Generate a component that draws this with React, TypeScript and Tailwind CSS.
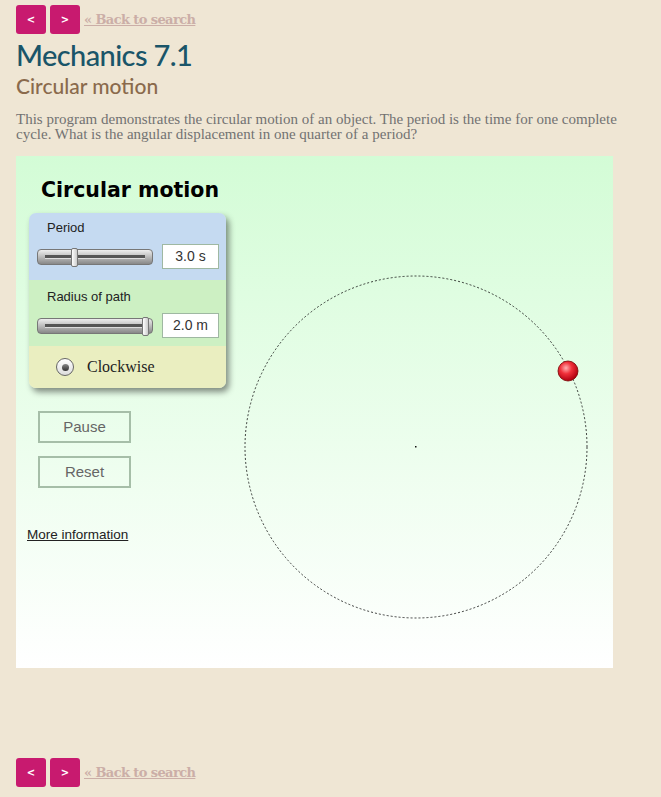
import React from 'react';

function NavRow() {
  return (
    <div className="flex items-center gap-[4px]">
      <button className="w-[30px] h-[29px] rounded-[3px] bg-[#c81a6f] text-white text-[10px] font-bold font-['DejaVu_Sans',sans-serif]">
        &lt;
      </button>
      <button className="w-[30px] h-[29px] rounded-[3px] bg-[#c81a6f] text-white text-[10px] font-bold font-['DejaVu_Sans',sans-serif]">
        &gt;
      </button>
      <a
        href="#"
        className="text-[13px] font-bold text-[#cbaea7] underline font-['DejaVu_Serif',serif] tracking-[-0.6px]"
      >
        « Back to search
      </a>
    </div>
  );
}

function Slider({ pos }: { pos: number }) {
  return (
    <div className="relative w-[116px] h-[16px] rounded-[4px] border border-[#777] bg-gradient-to-b from-[#eee] via-[#bbb] to-[#888]">
      <div className="absolute left-[7px] right-[7px] top-[5px] h-[4px] bg-[#555] border-b border-[#ddd]" />
      <div
        className="absolute top-[-2px] w-[7px] h-[19px] rounded-[2px] border border-[#777] bg-gradient-to-r from-[#fff] to-[#ccc]"
        style={{ left: pos }}
      />
    </div>
  );
}

function ValueBox({ value }: { value: string }) {
  return (
    <div className="w-[57px] h-[25px] bg-white border border-[#9fb8a2] flex items-center justify-center text-[14px] text-[#333] font-['Liberation_Sans',sans-serif]">
      {value}
    </div>
  );
}

function ControlPanel() {
  return (
    <div className="w-[197px] rounded-[7px] overflow-hidden shadow-[3px_4px_6px_rgba(0,0,0,0.45)] font-['Liberation_Sans',sans-serif]">
      <div className="bg-[#c5daf1] h-[67px] pl-[8px] pr-[7px] pt-[7px]">
        <div className="pl-[10px] text-[13px] text-[#222] leading-[16px]">Period</div>
        <div className="flex items-center justify-between mt-[8px]">
          <Slider pos={33} />
          <ValueBox value="3.0 s" />
        </div>
      </div>
      <div className="bg-[#cdf0c3] h-[66px] pl-[8px] pr-[7px] pt-[9px]">
        <div className="pl-[10px] text-[13px] text-[#222] leading-[16px]">Radius of path</div>
        <div className="flex items-center justify-between mt-[8px]">
          <Slider pos={104} />
          <ValueBox value="2.0 m" />
        </div>
      </div>
      <div className="bg-[#eaeec0] h-[42px] flex items-center pl-[27px]">
        <div className="w-[18px] h-[18px] rounded-full border border-[#666] bg-gradient-to-b from-[#fff] to-[#ddd] flex items-center justify-center">
          <div className="w-[7px] h-[7px] rounded-full bg-gradient-to-b from-[#888] to-[#333]" />
        </div>
        <span className="ml-[13px] text-[16px] text-[#222] font-['Liberation_Serif',serif]">Clockwise</span>
      </div>
    </div>
  );
}

function Orbit() {
  return (
    <svg width="383" height="512" viewBox="0 0 383 512" className="block">
      <defs>
        <radialGradient id="ball" cx="40%" cy="35%" r="65%">
          <stop offset="0%" stopColor="#ffb0b0" />
          <stop offset="45%" stopColor="#f0303a" />
          <stop offset="100%" stopColor="#b00010" />
        </radialGradient>
      </defs>
      <circle
        cx="186"
        cy="291"
        r="171"
        fill="none"
        stroke="#111"
        strokeWidth="0.8"
        strokeDasharray="2 2"
      />
      <rect x="185" y="290" width="1.5" height="1.5" fill="#111" />
      <circle cx="338" cy="215" r="10" fill="url(#ball)" stroke="#700" strokeWidth="0.8" />
    </svg>
  );
}

export default function App() {
  return (
    <div className="min-h-[797px] bg-[#efe6d4] pl-[16px] pt-[5px] pb-[11px]">
      <NavRow />
      <h1 className="mt-[3px] text-[29px] leading-[36px] text-[#1a5569] font-['Lato',sans-serif] font-medium tracking-[-0.6px]">
        Mechanics 7.1
      </h1>
      <h2 className="mt-[0px] text-[21px] leading-[26px] text-[#8a6a4c] font-['Lato',sans-serif] font-medium">
        Circular motion
      </h2>
      <p className="mt-[13px] w-[610px] text-[15px] leading-[15px] text-[#727272] font-['Liberation_Serif',serif]">
        This program demonstrates the circular motion of an object. The period is the time for one complete cycle. What is the angular displacement in one quarter of a period?
      </p>

      <div className="mt-[14px] w-[597px] h-[512px] bg-gradient-to-b from-[#d3fcd6] to-[#ffffff] flex">
        <div className="w-[214px] pl-[13px] pt-[22px]">
          <div className="pl-[12px] text-[20.5px] leading-[24px] font-bold text-black font-['DejaVu_Sans',sans-serif]">
            Circular motion
          </div>
          <div className="mt-[11px]">
            <ControlPanel />
          </div>
          <div className="pl-[9px] mt-[23px] flex flex-col gap-[13px] font-['Liberation_Sans',sans-serif]">
            <button className="w-[93px] h-[32px] border-2 border-[#a6bea8] text-[15px] text-[#666]">Pause</button>
            <button className="w-[93px] h-[32px] border-2 border-[#a6bea8] text-[15px] text-[#666]">Reset</button>
          </div>
          <a
            href="#"
            className="block -ml-[2px] mt-[37px] text-[13.5px] text-[#222] underline font-['Liberation_Sans',sans-serif]"
          >
            More information
          </a>
        </div>
        <Orbit />
      </div>

      <div className="mt-[90px]">
        <NavRow />
      </div>
    </div>
  );
}
